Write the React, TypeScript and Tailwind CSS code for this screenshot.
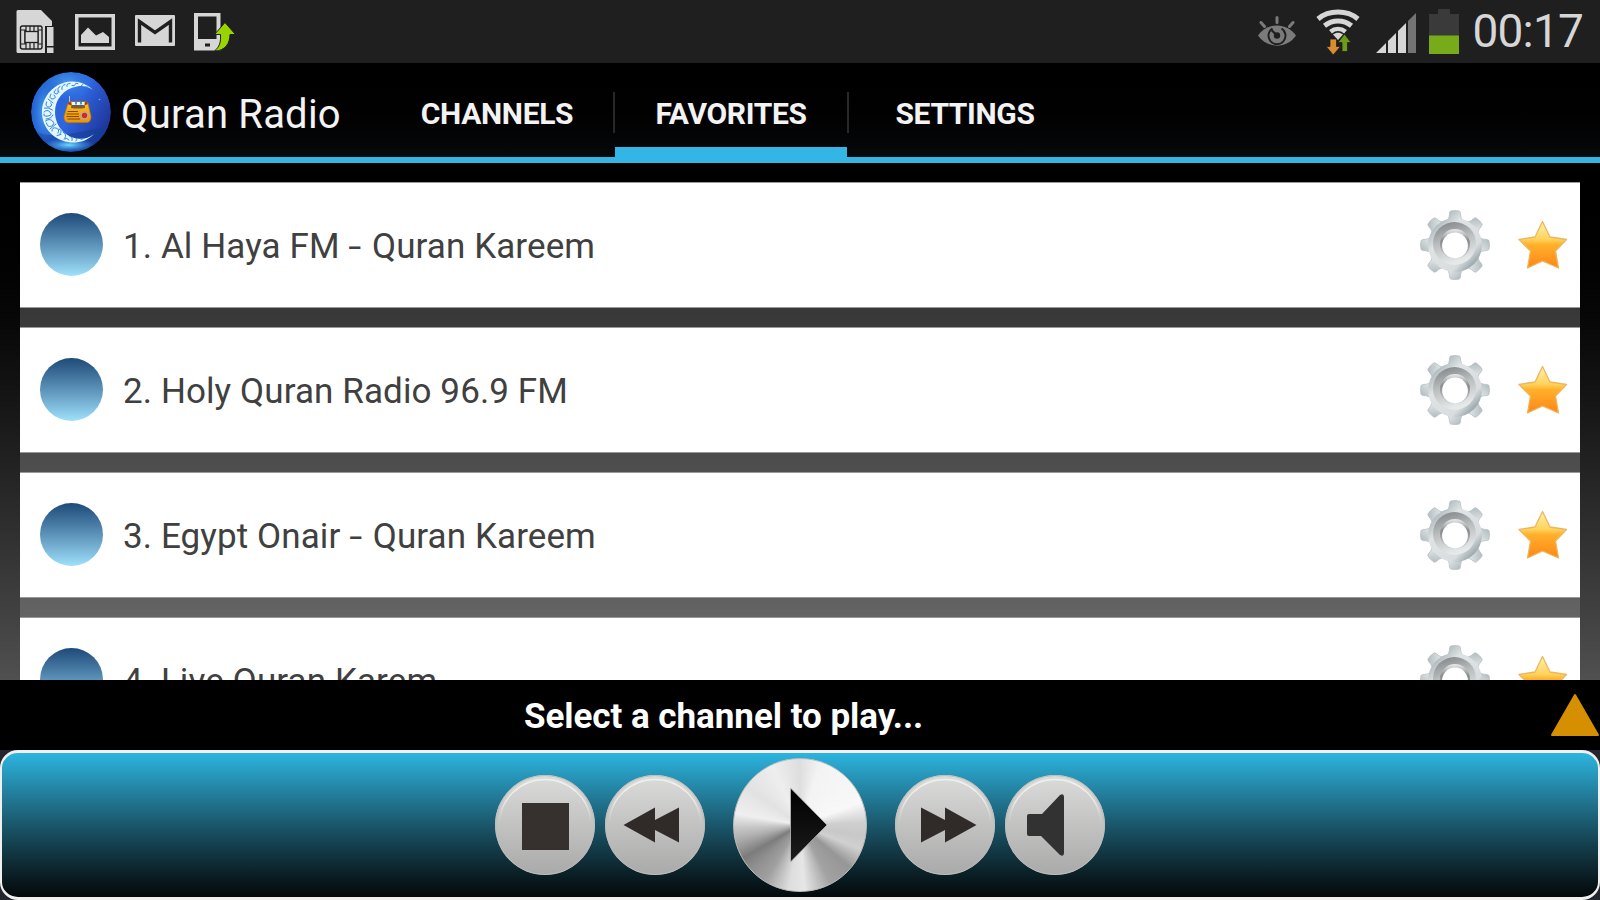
import type { ReactNode } from "react";

const channels = [
  "1. Al Haya FM - Quran Kareem",
  "2. Holy Quran Radio 96.9 FM",
  "3. Egypt Onair - Quran Kareem",
  "4. Live Quran Karem",
];

// eight teeth, one every 45 degrees
const teeth = [0, 45, 90, 135, 180, 225, 270, 315];

function SimIcon() {
  return (
    <svg width="40" height="46" viewBox="0 0 40 46" className="shrink-0">
      <path d="M2 1h23l11 11v5h-6v27H2a1.500 1.500 0 0 1-1.500-1.500v-40A1.500 1.500 0 0 1 2 1z" fill="#d6d6d6" />
      <rect x="4.500" y="17" width="21.500" height="23" rx="2" fill="#d6d6d6" stroke="#1f1f1f" strokeWidth="1.400" />
      <path d="M10 17v6M14 17v6M18 17v6M22 17v6M10 34v6M14 34v6M18 34v6M22 34v6M5 21h4v14H5M26 21h-4v14h4" fill="none" stroke="#1f1f1f" strokeWidth="1.200" />
      <rect x="9" y="22.500" width="13" height="11" fill="#d6d6d6" stroke="#1f1f1f" strokeWidth="1.300" />
      <rect x="29" y="17" width="10" height="28" fill="#1f1f1f" />
      <path d="M31 18h6.500v19H31zM31 38.500h6.500V44H31z" fill="#d6d6d6" />
    </svg>
  );
}

function GalleryIcon() {
  return (
    <svg width="40" height="36" viewBox="0 0 40 36" className="shrink-0">
      <rect x="1.750" y="1.750" width="36.500" height="32.500" fill="none" stroke="#d6d6d6" strokeWidth="3.500" />
      <path d="M6 29v-8l7-7.500 8 8 7-3.500 6 5v6z" fill="#d6d6d6" />
    </svg>
  );
}

function MailIcon() {
  return (
    <svg width="40" height="33" viewBox="0 0 40 33" className="shrink-0">
      <rect width="40" height="31" rx="1" fill="#d6d6d6" />
      <path d="M4.500 27.500V6.500L20 17.500 35.500 6.500v21" fill="none" stroke="#1f1f1f" strokeWidth="3.400" />
    </svg>
  );
}

function PhoneUpdateIcon() {
  return (
    <svg width="42" height="40" viewBox="0 0 42 40" className="shrink-0">
      <rect y="1" width="26.500" height="37.500" fill="#d6d6d6" />
      <path d="M4 4.500h18.500v22.500H4zM11 31.500h5v3h-5z" fill="#1f1f1f" />
      <path d="M31 10.500 41.500 22.500h-5.500c0 9-5 16.500-15.500 16.500 5-4 6.500-9 6-16.500h-6z" fill="#99d300" stroke="#1f1f1f" strokeWidth="1" />
    </svg>
  );
}

function EyeIcon() {
  return (
    <svg width="38" height="31" viewBox="0 0 38 31" className="shrink-0">
      <path d="M0 19.500C9 6 29 6 38 19.500 29 33 9 33 0 19.500z" fill="#7b7b7b" />
      <path d="M19 1.500v5M3 6.500l3.500 4M35 6.500l-3.500 4" stroke="#7b7b7b" strokeWidth="3" strokeLinecap="round" />
      <path d="M14.500 12.500a8.500 8.500 0 1 0 9 0" fill="none" stroke="#1f1f1f" strokeWidth="1.900" />
      <path d="M13.500 14l5 5" stroke="#1f1f1f" strokeWidth="2.200" />
      <circle cx="19" cy="19.500" r="3.200" fill="#1f1f1f" />
    </svg>
  );
}

function WifiIcon() {
  return (
    <svg width="44" height="46" viewBox="0 0 44 46" className="shrink-0">
      <g fill="none" stroke="#d6d6d6" strokeWidth="5">
        <path d="M2 10C13 .8 31 .8 42 10" />
        <path d="M8.500 16.800c8-6.400 19-6.400 27 0" />
        <path d="M14.500 22.800c4.500-3.600 10.500-3.600 15 0" strokeWidth="4.500" />
      </g>
      <path d="M17 25.500c3-2.200 7-2.200 10 0L22 31z" fill="#d6d6d6" />
      <path d="M14 30h6.500v7.500h4L17.200 46l-7-8.500H14z" fill="#d98d2e" stroke="#1f1f1f" strokeWidth=".8" />
      <path d="M28.500 25l6.500 8.500h-3.500v9H26v-9h-4z" fill="#6f9c17" stroke="#1f1f1f" strokeWidth=".8" />
    </svg>
  );
}

function SignalIcon() {
  return (
    <svg width="41" height="40" viewBox="0 0 41 40" className="mt-[3px] shrink-0">
      <path d="M0 40 10 30v10zM12 28l8-8v20h-8zM22 18l8-8v30h-8z" fill="#d6d6d6" />
      <path d="M32 8l8-8v40h-8z" fill="#747474" />
    </svg>
  );
}

function BatteryIcon() {
  return (
    <svg width="30" height="45" viewBox="0 0 30 45" className="shrink-0">
      <path d="M9 0h12v5h9v22H0V5h9z" fill="#3a3a3a" />
      <path d="M0 26.500h30V45H0z" fill="#78ab19" />
    </svg>
  );
}

function AppLogo() {
  return (
    <svg width="80" height="80" viewBox="0 0 80 80" className="shrink-0">
      <defs>
        <linearGradient id="sky" x1="0" y1=".2" x2="1" y2=".8">
          <stop offset="0" stopColor="#1f62cf" />
          <stop offset=".5" stopColor="#2f66e0" />
          <stop offset="1" stopColor="#1c2b8c" />
        </linearGradient>
        <radialGradient id="glow">
          <stop offset="0" stopColor="#6fdcff" />
          <stop offset="1" stopColor="#3aa0f0" stopOpacity="0" />
        </radialGradient>
        <linearGradient id="radio" x1="0" y1="0" x2="0" y2="1">
          <stop offset="0" stopColor="#ffc21f" />
          <stop offset="1" stopColor="#ef9300" />
        </linearGradient>
        <clipPath id="disc">
          <circle cx="40" cy="40" r="40" />
        </clipPath>
      </defs>
      <g clipPath="url(#disc)">
        <circle cx="40" cy="40" r="40" fill="url(#sky)" />
        <ellipse cx="36" cy="10" rx="28" ry="18" fill="url(#glow)" opacity=".4" />
        <path d="M0 58q18 8 38 4t42-8v26H0z" fill="#123f95" opacity=".55" />
        <ellipse cx="38" cy="73" rx="26" ry="7" fill="url(#glow)" />
        <ellipse cx="14" cy="40" rx="13" ry="30" fill="url(#glow)" opacity=".6" />
        <path
          d="M62 18C56 14 51 13.500 46 14.500 32 17 24 28 24 40s8 24 22 26.500c6 1 11 0 17-4.500C56 69 48 71 40 70.500 24 69 11 57 11 40 11 24 24 10 40 9.500c8-.5 16 2.500 22 8.500z"
          fill="#e4f6ff"
        />
        {/* lace pattern */}
        <g fill="none" stroke="#2f86e2" strokeWidth="1" strokeLinecap="round">
          <path d="M57 15l-3 0M52 12.500l-2 1.500M47 11.500q-3-1-3 1t-3 1M39 11.500q-4 0-3 3M34 12.500q-4 1-3 5M29 14.500q-4 2-1 5.500" />
          <path d="M25 17.500q-4 3 0 4.500 3 0 2-3M20 22q-3 5 2 5 4-1 1-4M17 27l5 4M15.500 30q-2 5 3 5 4-2 1-4" />
          <path d="M13.500 36q4-1 8 2M13 40q3-3 6 0t-2 4-4-2M22 43q-2 4-7 4M14.500 49q4-3 7 0t-1 5-5-3" />
          <path d="M25 52l-6 5M21 59q0-4 4-3t2 5M28 57q4 1 1 5M26 63.500l4-1M32 60q4 2 2 6M33 67q3-2 5 1M39 64.500q3 0 2 4M45 66q2 1 0 3M50 67.500l3-1" />
        </g>
      </g>
      <circle cx="68.500" cy="27.500" r=".8" fill="#7ba8ff" />
      <path d="M38.500 24v9" stroke="#b9c3dd" strokeWidth="1" />
      <path d="M37 31.500q1-2 4-2h12q3 0 4 2l3 13q0 5.500-4 6H37q-4-.5-4-6z" fill="url(#radio)" stroke="#c77406" strokeWidth=".7" />
      <path d="M36.500 32q1-2.500 3-2.500l1 4M57 32q-1-2.500-3-2.500l-1 4" fill="#a53b1c" />
      <path d="M41 29.500h12l1 6.500q-7 1-14 0z" fill="#7d5a3a" />
      <path d="M41 30h12.500v3H41z" fill="#eaf7fa" />
      <path d="M44 30h2v2.500h-2zM49 30h2v2.500h-2z" fill="#31a6c8" />
      <path d="M36.500 39.500H47M35.500 42H48M35.500 44.500H48M36.500 47H49" stroke="#7b4a0c" strokeWidth="1.100" />
      <circle cx="53.500" cy="43.500" r="4.300" fill="#b8a9a4" />
      <circle cx="53.500" cy="43.500" r="2.700" fill="#cf2a23" />
    </svg>
  );
}

function GearIcon() {
  return (
    <svg width="70" height="70" viewBox="0 0 70 70" className="shrink-0">
      <defs>
        <linearGradient id="steel" gradientUnits="userSpaceOnUse" x1="8" y1="10" x2="62" y2="62">
          <stop offset="0" stopColor="#aab6bb" />
          <stop offset=".14" stopColor="#b4bfc3" />
          <stop offset=".3" stopColor="#dfe3e4" />
          <stop offset=".7" stopColor="#dadddf" />
          <stop offset=".86" stopColor="#95a3a8" />
          <stop offset="1" stopColor="#d5dadb" />
        </linearGradient>
        <linearGradient id="ring" x1="0" y1="0" x2=".3" y2="1">
          <stop offset="0" stopColor="#7d8082" />
          <stop offset=".5" stopColor="#b9bdbe" />
          <stop offset="1" stopColor="#e6e9e9" />
        </linearGradient>
        <linearGradient id="bore" x1="0" y1="0" x2="0" y2="1">
          <stop offset="0" stopColor="#e9ebeb" />
          <stop offset=".4" stopColor="#85898b" />
          <stop offset="1" stopColor="#d5d8d9" />
        </linearGradient>
      </defs>
      <g fill="url(#steel)" stroke="#b3bbbd" strokeWidth=".7">
        {teeth.map((a) => (
          <path key={a} d="M25 12q4.500-2 4.500-9l1-2q4.500-1 9 0l1 2q0 7 4.500 9z" transform={`rotate(${a} 35 35)`} />
        ))}
      </g>
      <circle cx="35" cy="35" r="27" fill="url(#steel)" />
      <circle cx="34.500" cy="33.500" r="21.500" fill="url(#ring)" />
      <circle cx="35" cy="34" r="15" fill="url(#bore)" />
      <circle cx="35" cy="35.500" r="12.900" fill="#fff" />
    </svg>
  );
}

function StarIcon() {
  return (
    <svg width="50" height="50" viewBox="0 0 50 50" className="shrink-0">
      <defs>
        <linearGradient id="gold" x1="0" y1="0" x2="0" y2="1">
          <stop offset="0" stopColor="#fff0b0" />
          <stop offset=".38" stopColor="#ffd35c" />
          <stop offset=".5" stopColor="#ffb02b" />
          <stop offset="1" stopColor="#ff8517" />
        </linearGradient>
      </defs>
      <path
        d="M24.500 1.500 32 17 48.500 19.500 37.500 31 40.500 48 24.500 41 9.500 48 12.500 31 1 19.500 17 17z"
        fill="url(#gold)"
        stroke="#ecb75c"
        strokeWidth="1.300"
        strokeLinejoin="round"
      />
    </svg>
  );
}

function RoundButton({ label, children }: { label: string; children: ReactNode }) {
  return (
    <button
      type="button"
      aria-label={label}
      className="size-[100px] shrink-0 rounded-full bg-linear-to-b from-[#dcdcdb] to-[#a9a9a9]"
    >
      <svg width="100" height="100" viewBox="0 0 100 100">
        <defs>
          <linearGradient id="shine" x1="0" y1="0" x2="0" y2="1">
            <stop offset="0" stopColor="#f0f0ef" />
            <stop offset=".5" stopColor="#f0f0ef" stopOpacity=".8" />
            <stop offset="1" stopColor="#e0e0e0" stopOpacity="0" />
          </linearGradient>
        </defs>
        <circle cx="50" cy="50" r="49.500" fill="none" stroke="#bcbcbb" />
        <path d="M4.500 49a45.500 44.500 0 0 1 91 0" fill="none" stroke="url(#shine)" strokeWidth="1.500" />
        {children}
      </svg>
    </button>
  );
}

function ChannelRow({ name }: { name: string }) {
  const [title, network] = name.split(" - ");

  return (
    <li className="flex h-[126px] shrink-0 items-center border-y border-[#999] bg-white pr-[12px] pl-[20px]">
      <span className="mb-[2px] size-[63px] shrink-0 rounded-full bg-linear-to-b from-[#1f4a79] to-[#9fe1fb]" />
      <span className="ml-[20px] flex-1 pt-[4px] text-[35px] tracking-[0.1px] whitespace-nowrap text-[#404040]">
        {title}
        {network && (
          <>
            {" "}
            <span className="mr-[3px] ml-[2px] inline-block scale-x-135">-</span> {network}
          </>
        )}
      </span>
      <GearIcon />
      <span className="ml-[28px]">
        <StarIcon />
      </span>
    </li>
  );
}

export default function App() {
  return (
    <div className="flex h-[900px] w-[1600px] flex-col overflow-hidden bg-black font-['Roboto',sans-serif]">
      {/* Status bar */}
      <div className="flex h-[63px] shrink-0 items-center justify-between bg-[#1f1f1f] pr-[17px] pl-[16px]">
        <div className="flex items-center">
          <SimIcon />
          <span className="ml-[19px]"><GalleryIcon /></span>
          <span className="ml-[20px]"><MailIcon /></span>
          <span className="ml-[19px]"><PhoneUpdateIcon /></span>
        </div>
        <div className="flex items-center">
          <EyeIcon />
          <span className="ml-[20px]"><WifiIcon /></span>
          <span className="ml-[16px]"><SignalIcon /></span>
          <span className="ml-[12px]"><BatteryIcon /></span>
          <span className="ml-[13px] pb-[2px] text-[46px] leading-[60px] tracking-[-0.8px] text-[#d6d6d6]">00:17</span>
        </div>
      </div>

      {/* Action bar */}
      <header className="flex h-[100px] shrink-0 border-b-[6px] border-[#33b5e5] bg-linear-to-b from-black to-[#08090c] pl-[31px]">
        <div className="flex w-[350px] items-center pt-[4px]">
          <AppLogo />
          <h1 className="ml-[10px] pt-[5px] text-[40px] tracking-[0.2px] whitespace-nowrap text-[#f3f3f3]">
            Quran Radio
          </h1>
        </div>
        <nav className="flex text-[30px] font-bold tracking-[-0.35px] text-[#f3f3f3]">
          <div className="flex w-[232px] items-center justify-center pt-[6px]">CHANNELS</div>
          <div className="mt-[29px] h-[41px] w-[2px] bg-[#282828]" />
          <div className="flex w-[232px] items-center justify-center border-b-10 border-[#33b5e5] pt-[16px]">FAVORITES</div>
          <div className="mt-[29px] h-[41px] w-[2px] bg-[#282828]" />
          <div className="flex w-[232px] items-center justify-center pt-[6px]">SETTINGS</div>
        </nav>
      </header>

      {/* Channel list */}
      <main className="h-[517px] shrink-0 overflow-hidden bg-linear-to-b from-black to-[#505050] px-[20px] pt-[19px]">
        <ul className="flex h-[498px] flex-col gap-[19px] overflow-hidden bg-linear-to-b from-[#272727] to-[#6d6d6d]">
          {channels.map((name) => (
            <ChannelRow key={name} name={name} />
          ))}
        </ul>
      </main>

      {/* Now playing */}
      <div className="flex h-[70px] shrink-0 items-center bg-black">
        <p className="w-[1447px] pt-[4px] text-center text-[35px] font-bold tracking-[-0.04px] text-white">
          Select a channel to play...
        </p>
        <svg width="50" height="44" viewBox="0 0 50 44" className="ml-auto">
          <path d="M25 2 48 42H2z" fill="#d68f00" stroke="#d68f00" strokeWidth="2" strokeLinejoin="round" />
        </svg>
      </div>

      {/* Player */}
      <footer className="h-[150px] shrink-0 bg-[#23262d]">
        <div className="flex h-[150px] items-center justify-center rounded-[18px] border-[3px] border-x-[2px] border-[#f0f0f0] bg-linear-to-b from-[#2cb5e0] to-[#04090b]">
          <RoundButton label="Stop">
            <path d="M27 28h47v47H27z" fill="#36312f" />
          </RoundButton>
          <span className="w-[10px]" />
          <RoundButton label="Previous">
            <path d="M18.500 50 50 32.500v12.500L74 32.500v35L50 55v12.500z" fill="#302b29" />
          </RoundButton>
          <button
            type="button"
            aria-label="Play"
            className="mx-[28px] size-[134px] shrink-0 rounded-full border border-[#bdbdbd] bg-[conic-gradient(#dedede,#f3f3f3_18deg,#f8f8f8_70deg,#cfcfcf_88deg,#c8c8c8_100deg,#d0d0d0_112deg,#969696_130deg,#a2a2a2_152deg,#e6e6e6_176deg,#dedede_190deg,#a0a0a0_212deg,#8f8f8f_228deg,#7c7c7c_240deg,#b0b0b0_258deg,#c8c8c8_268deg,#efefef_280deg,#e2e2e2_305deg,#eee_335deg,#dedede)]"
          >
            <svg width="132" height="132" viewBox="0 0 132 132">
              <defs>
                <linearGradient id="ink" x1="0" y1="0" x2="0" y2="1">
                  <stop offset="0" stopColor="#000" />
                  <stop offset="1" stopColor="#1c1c1c" />
                </linearGradient>
              </defs>
              <path d="M56.500 29 93 66 56.500 103z" fill="url(#ink)" stroke="#bbb" strokeWidth=".8" />
            </svg>
          </button>
          <RoundButton label="Next">
            <path d="M26 32.500 50 45V32.500L81.500 50 50 67.500V55L26 67.500z" fill="#302b29" />
          </RoundButton>
          <span className="w-[10px]" />
          <RoundButton label="Volume">
            <path d="M24 39h13l18-19q4-2 4 2v56q0 4-4 2L36 61H24q-2 0-2-2V41q0-2 2-2z" fill="#323232" />
          </RoundButton>
        </div>
      </footer>
    </div>
  );
}
